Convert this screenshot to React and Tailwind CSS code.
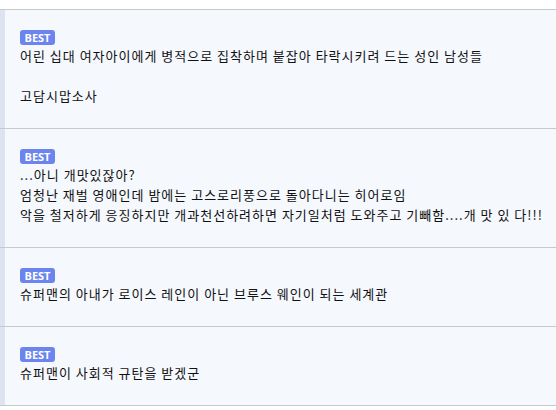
import React from 'react';

const comments = [
  { id: 1, lines: ['어린 십대 여자아이에게 병적으로 집착하며 붙잡아 타락시키려 드는 성인 남성들', '', '고담시맙소사'] },
  {
    id: 2,
    lines: [
      '...아니 개맛있잖아?',
      '엄청난 재벌 영애인데 밤에는 고스로리풍으로 돌아다니는 히어로임',
      '악을 철저하게 응징하지만 개과천선하려하면 자기일처럼 도와주고 기빼함....개 맛 있 다!!!',
    ],
  },
  { id: 3, lines: ['슈퍼맨의 아내가 로이스 레인이 아닌 브루스 웨인이 되는 세계관'] },
  { id: 4, lines: ['슈퍼맨이 사회적 규탄을 받겠군'] },
];

export default function App() {
  return (
    <div className="w-[556px] h-[410px] overflow-hidden bg-white font-['Noto_Sans_CJK_KR',sans-serif] text-[13px] text-[#111]">
      <div className="h-[9px] bg-white" />
      <div className="border-t border-[#c9c9c9]">
        {comments.map((c) => (
          <div key={c.id} className="flex border-b border-[#c9c9c9] bg-[#f5f8fd]">
            <div className="w-[5px] shrink-0 bg-[#dde4f1]" />
            <div className="pl-[15px] pr-2 pt-[20px] pb-[22px]">
              <div className="flex h-[15px] w-[35px] items-center justify-center rounded-[3px] bg-[#6c84ee] font-['Open_Sans',sans-serif] text-[11px] font-bold leading-none text-white">
                BEST
              </div>
              <div className="mt-[1px] whitespace-nowrap leading-[20px] tracking-[1px]">
                {c.lines.map((l, i) => (
                  <div key={i} className="h-[20px]">{l}</div>
                ))}
              </div>
            </div>
          </div>
        ))}
      </div>
    </div>
  );
}
